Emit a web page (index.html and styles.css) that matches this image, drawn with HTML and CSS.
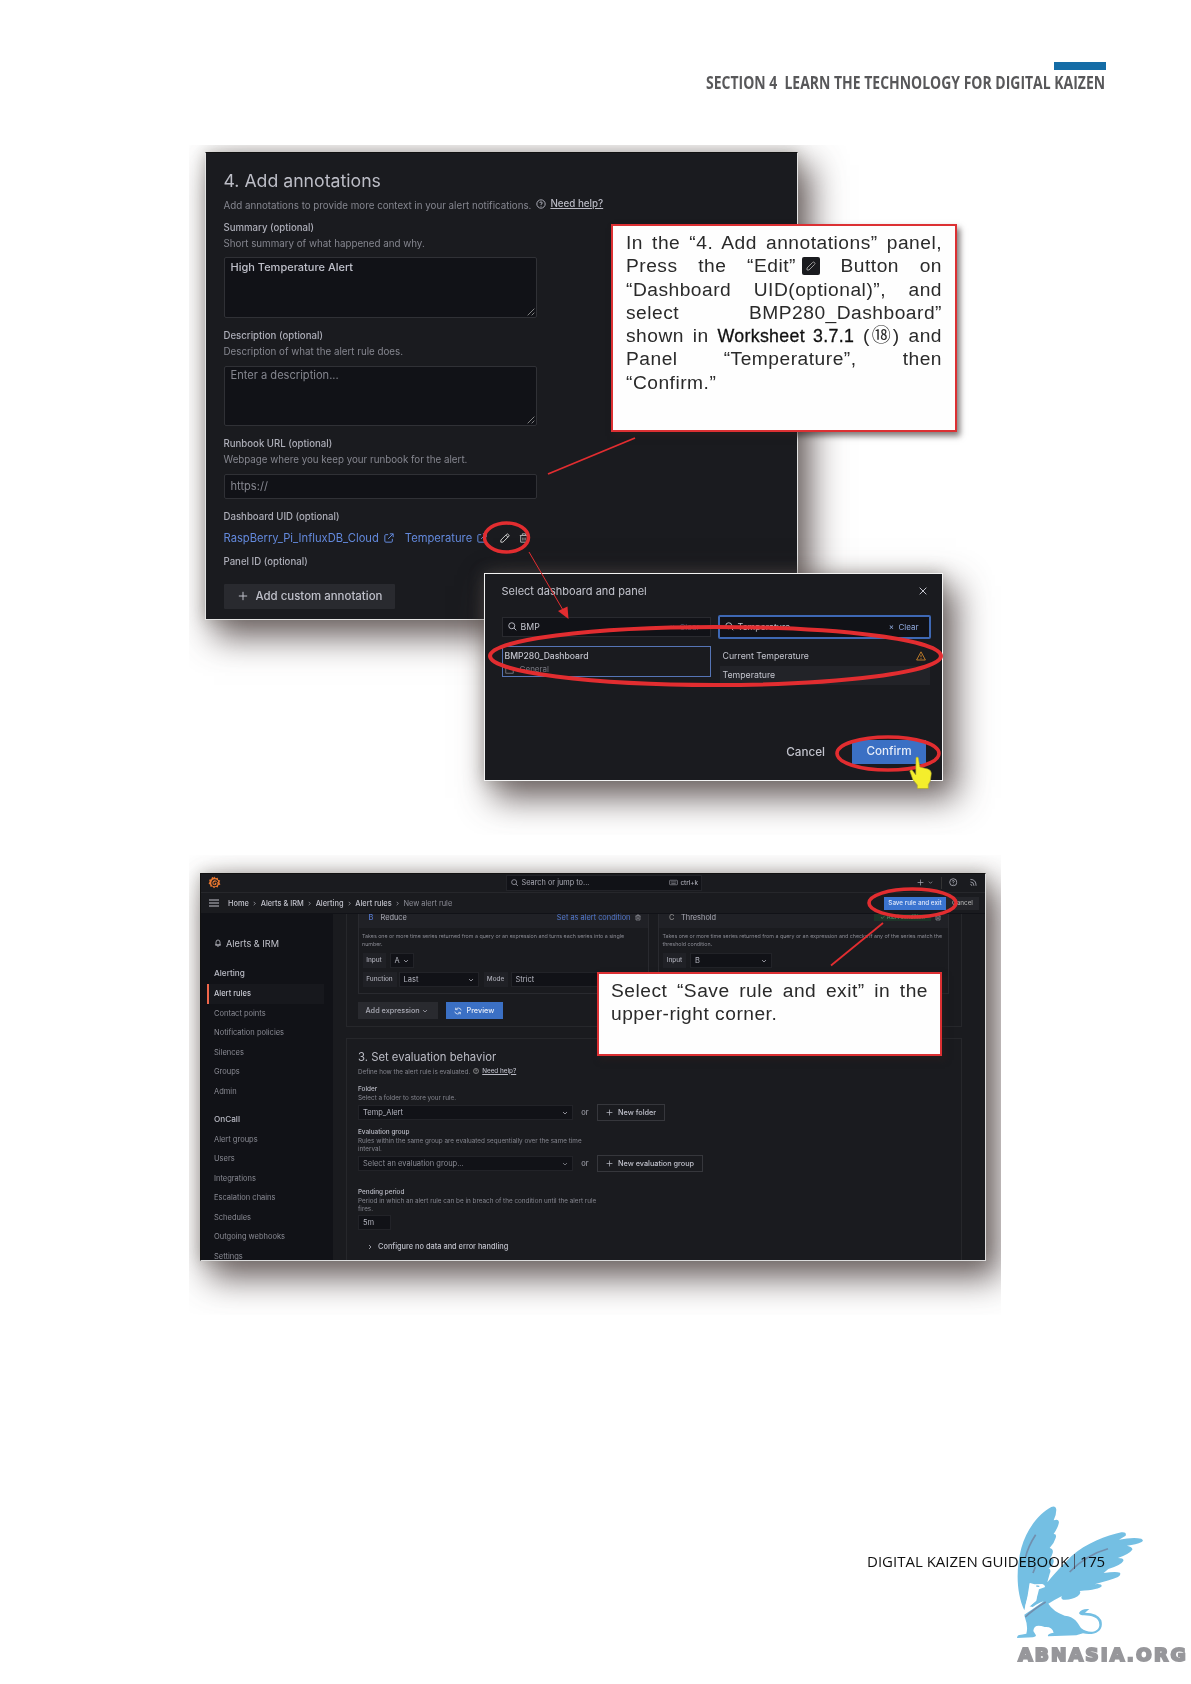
FILE: index.html
```html
<!DOCTYPE html>
<html lang="en">
<head>
<meta charset="utf-8">
<title>Digital Kaizen Guidebook – 175</title>
<link rel="stylesheet" href="styles.css">
</head>
<body>
<svg width="0" height="0" class="defs">
  <symbol id="search" viewBox="0 0 12 12"><circle cx="5" cy="5" r="4"/><path d="M8 8l3 3"/></symbol>
  <symbol id="ext" viewBox="0 0 12 12"><path d="M5 2H2.200Q1 2 1 3.200V9.800Q1 11 2.200 11H8.800Q10 11 10 9.800V7M7 1h4v4M11 1L5 7"/></symbol>
  <symbol id="pencil" viewBox="0 0 12 12"><path d="M1 11V8.500L8 1.500Q8.800.700 9.700 1.500L10.500 2.300Q11.300 3.200 10.500 4L3.500 11ZM7 2.500L9.500 5"/></symbol>
  <symbol id="trash" viewBox="0 0 12 12"><path d="M1 3h10M4 3V1h4v2M2 3v8h8V3M4.700 5.500v3.500M7.300 5.500v3.500"/></symbol>
  <symbol id="plus" viewBox="0 0 12 12"><path d="M6 1v10M1 6h10"/></symbol>
  <symbol id="cross" viewBox="0 0 12 12"><path d="M2 2l8 8M10 2L2 10"/></symbol>
  <symbol id="down" viewBox="0 0 12 12"><path d="M2 4l4 4 4-4"/></symbol>
  <symbol id="right" viewBox="0 0 12 12"><path d="M4 2l4 4-4 4"/></symbol>
  <symbol id="help" viewBox="0 0 12 12"><circle cx="6" cy="6" r="5"/><path d="M4.500 4.800Q4.600 3.500 6 3.500T7.500 4.800Q7.500 5.800 6 6.200V7M6 8.200v1"/></symbol>
  <symbol id="grip" viewBox="0 0 12 12"><path d="M1 11L11 1M7 11l4-4"/></symbol>
</svg>

<header class="page-head">
  <div class="tab"></div>
  <div class="section-name"><span>SECTION 4&nbsp; LEARN THE TECHNOLOGY FOR DIGITAL KAIZEN</span></div>
</header>

<figure class="fig fig-a">
  <div class="annot">
    <h2>4. Add annotations</h2>
    <div class="help-row"><span class="intro">Add annotations to provide more context in your alert notifications.</span><svg class="ic"><use href="#help"/></svg><u>Need help?</u></div>
    <label>Summary (optional)</label>
    <p>Short summary of what happened and why.</p>
    <div class="area filled">High Temperature Alert<svg class="grip"><use href="#grip"/></svg></div>
    <label>Description (optional)</label>
    <p>Description of what the alert rule does.</p>
    <div class="area">Enter a description...<svg class="grip"><use href="#grip"/></svg></div>
    <label>Runbook URL (optional)</label>
    <p>Webpage where you keep your runbook for the alert.</p>
    <div class="area line">https://</div>
    <label class="uid">Dashboard UID (optional)</label>
    <div class="links"><span class="l1">RaspBerry_Pi_InfluxDB_Cloud</span><svg class="ic"><use href="#ext"/></svg><span class="l2">Temperature</span><svg class="ic"><use href="#ext"/></svg><svg class="ic pen"><use href="#pencil"/></svg><svg class="ic bin"><use href="#trash"/></svg></div>
    <label class="pid">Panel ID (optional)</label>
    <div class="add"><svg class="ic"><use href="#plus"/></svg><span>Add custom annotation</span></div>
  </div>

  <div class="dialog">
    <div class="d-title"><span>Select dashboard and panel</span><svg class="ic"><use href="#cross"/></svg></div>
    <div class="d-cols">
      <div class="d-col">
        <div class="d-search"><svg class="ic"><use href="#search"/></svg><span>BMP</span><em>×&nbsp; Clear</em></div>
        <div class="d-item"><b>BMP280_Dashboard</b><i><svg class="ic" viewBox="0 0 12 12"><path d="M1 2h4l1 2h5v7H1z"/></svg>General</i></div>
      </div>
      <div class="d-col">
        <div class="d-search on"><svg class="ic"><use href="#search"/></svg><span>Temperature</span><em>×&nbsp; Clear</em></div>
        <div class="d-row"><span>Current Temperature</span><svg class="warn" viewBox="0 0 12 12"><path d="M6 1L11.300 10.800H.700ZM6 4.500v3M6 8.500v1"/></svg></div>
        <div class="d-row sel"><span>Temperature</span></div>
      </div>
    </div>
    <div class="d-foot"><span class="cancel">Cancel</span><span class="confirm">Confirm</span></div>
  </div>

  <div class="note note-a">
    <div>In the “4. Add annotations” panel,</div>
    <div>Press the “Edit”<svg class="edit" viewBox="0 0 18 18"><rect width="18" height="18" rx="2"/><path d="M5 13v-2l5.500-5.500q1-1 2 0t0 2L7 13z"/></svg> Button on</div>
    <div>“Dashboard UID(optional)”, and</div>
    <div>select BMP280_Dashboard”</div>
    <div>shown in <span class="ws">Worksheet&nbsp;3.7.1</span> (<span class="num18">⑱</span>) and</div>
    <div>Panel “Temperature”, then</div>
    <div class="last">“Confirm.”</div>
  </div>

  <svg class="marks" viewBox="189 145 812 690">
    <ellipse cx="506.500" cy="537.500" rx="22" ry="14.500" stroke-width="3.500"/>
    <ellipse cx="715.500" cy="656" rx="225.500" ry="29" stroke-width="4"/>
    <ellipse cx="888" cy="753.500" rx="51" ry="16.500" stroke-width="3.600"/>
    <path d="M548 474L635 438" stroke-width="1.800"/>
    <path d="M529 552L563 610" stroke-width="1"/>
    <path d="M558 611L567.500 606.500L568.500 619Z" class="head"/>
    <path class="hand" d="M916 757.500q1.300-1 2.300.300l1.500 9.200 8 2q3.500 1 3.500 4.500l-1 7.500-2 3.500v4h-11v-3.500l-4.500-5.500-3-8.500q1.500-2 3.500.500l2.500 3.500z"/>
  </svg>
</figure>

<figure class="fig fig-b">
  <div class="app">
    <div class="top">
      <svg class="logo" viewBox="0 0 24 24"><path d="M12 1l2 3 4-1 .500 4 4 1.500-1.500 3.500 2 3.500-4 1.500-1 4-4-1-3 2.500-2.500-3-4 .500-.500-4L1 14l2-3.500L2 7l4-1 1.500-4L11 3z"/><path class="swirl" d="M18 11.500Q17 7 12.500 7T7 12.500Q7 18 12 18T16.500 13.500Q15.500 10.500 12.500 11.500T12.500 15"/></svg>
      <div class="jump"><svg class="ic"><use href="#search"/></svg><span>Search or jump to...</span><svg class="kbd" viewBox="0 0 16 12"><rect x="1" y="2" width="14" height="8" rx="1"/><path d="M3 5h10M4 8h8"/></svg><em>ctrl+k</em></div>
      <div class="tools"><svg class="ic"><use href="#plus"/></svg><svg class="ic sm"><use href="#down"/></svg><i></i><svg class="ic big"><use href="#help"/></svg><svg class="ic big rss" viewBox="0 0 12 12"><path d="M2 2Q10 2 10 11M2 5.500Q7 5.500 7 11M2 9q2 0 2 2"/></svg></div>
    </div>
    <div class="crumbs">
      <svg class="burger" viewBox="0 0 10 8"><path d="M0 1h10M0 4h10M0 7h10"/></svg>
      <span class="c1">Home</span><svg class="ic sm"><use href="#right"/></svg><span class="c2">Alerts &amp; IRM</span><svg class="ic sm"><use href="#right"/></svg><span class="c3">Alerting</span><svg class="ic sm"><use href="#right"/></svg><span class="c4">Alert rules</span><svg class="ic sm"><use href="#right"/></svg><span class="c5">New alert rule</span>
      <b class="save">Save rule and exit</b><b class="can">Cancel</b>
    </div>
    <div class="body">
      <nav>
        <div class="n-title"><svg class="ic" viewBox="0 0 12 12"><path d="M3 9V5Q3 1.500 6 1.500T9 5V9ZM1.500 9h9M5 11h2"/></svg>Alerts &amp; IRM</div>
        <div class="n-h">Alerting</div>
        <div class="n on">Alert rules</div>
        <div class="n">Contact points</div>
        <div class="n">Notification policies</div>
        <div class="n">Silences</div>
        <div class="n">Groups</div>
        <div class="n">Admin</div>
        <div class="n-h oc">OnCall</div>
        <div class="n">Alert groups</div>
        <div class="n">Users</div>
        <div class="n">Integrations</div>
        <div class="n">Escalation chains</div>
        <div class="n">Schedules</div>
        <div class="n">Outgoing webhooks</div>
        <div class="n">Settings</div>
      </nav>
      <main>
        <section class="exprs">
          <div class="cards">
            <div class="card">
              <div class="c-head"><b>B</b><span>Reduce</span><em>Set as alert condition</em><svg class="ic"><use href="#trash"/></svg></div>
              <p>Takes one or more time series returned from a query or an expression and turns each series into a single<br>number.</p>
              <div class="f-row"><label class="w23">Input</label><div class="sel w24">A<svg class="ic sm"><use href="#down"/></svg></div></div>
              <div class="f-row"><label class="w34">Function</label><div class="sel w80">Last<svg class="ic sm"><use href="#down"/></svg></div><label class="w24 mode">Mode</label><div class="sel w130">Strict</div></div>
            </div>
            <div class="card">
              <div class="c-head"><b class="grey">C</b><span>Threshold</span><u>✓ Alert condition</u><svg class="ic"><use href="#trash"/></svg></div>
              <p>Takes one or more time series returned from a query or an expression and checks if any of the series match the<br>threshold condition.</p>
              <div class="f-row"><label class="w23">Input</label><div class="sel w82">B<svg class="ic sm"><use href="#down"/></svg></div></div>
            </div>
          </div>
          <div class="btns"><div class="b-add">Add expression<svg class="ic sm"><use href="#down"/></svg></div><div class="b-prev"><svg class="ic" viewBox="0 0 12 12"><path d="M2.500 1v3h3M2.500 4Q4 1.500 6.500 1.500Q10 1.500 10.800 5M9.500 11V8h-3M9.500 8Q8 10.500 5.500 10.500Q2 10.500 1.200 7"/></svg>Preview</div></div>
        </section>
        <section class="evals">
          <h3>3. Set evaluation behavior</h3>
          <div class="e-help"><span>Define how the alert rule is evaluated.</span><svg class="ic"><use href="#help"/></svg><u>Need help?</u></div>
          <div class="lab lab1">Folder</div>
          <div class="sub">Select a folder to store your rule.</div>
          <div class="pick"><div class="sel">Temp_Alert<svg class="ic sm"><use href="#down"/></svg></div><span>or</span><div class="new n1"><svg class="ic"><use href="#plus"/></svg>New folder</div></div>
          <div class="lab lab2">Evaluation group</div>
          <div class="sub wide">Rules within the same group are evaluated sequentially over the same time<br>interval.</div>
          <div class="pick"><div class="sel dim">Select an evaluation group...<svg class="ic sm"><use href="#down"/></svg></div><span>or</span><div class="new n2"><svg class="ic"><use href="#plus"/></svg>New evaluation group</div></div>
          <div class="lab lab3">Pending period</div>
          <div class="sub">Period in which an alert rule can be in breach of the condition until the alert rule<br>fires.</div>
          <div class="sel five">5m</div>
          <div class="conf"><svg class="ic sm"><use href="#right"/></svg>Configure no data and error handling</div>
        </section>
      </main>
    </div>
  </div>
  <div class="note note-b"><div>Select “Save rule and exit” in the</div><div class="last">upper-right corner.</div></div>
  <svg class="marks" viewBox="189 855 812 460">
    <ellipse cx="912.500" cy="903" rx="43.500" ry="14" stroke-width="3.600"/>
    <path d="M831 965.500L883 923" stroke-width="1.800"/>
  </svg>
</figure>

<footer><span class="book">DIGITAL KAIZEN GUIDEBOOK</span><i></i><span class="num">175</span></footer>

<div class="brand">
  <svg viewBox="490 40 400 410">
    <path d="M524 362C500 310 498 240 515 175C532 115 570 70 605 52Q618 47 620 60Q620 75 612 92Q626 86 628 97Q627 110 612 133Q622 132 618 145Q614 160 600 175Q612 178 609 190Q606 200 602 205Q614 205 612 217Q610 228 597 236Q606 240 600 252L593 278Q620 245 665 200C710 160 770 138 815 128Q832 126 828 138L808 150Q850 142 875 147Q884 152 876 157Q860 165 832 168Q850 172 848 180Q840 192 805 205Q824 205 821 214Q815 226 776 238L762 250Q800 244 811 249Q815 257 805 262Q780 272 735 284Q757 281 756 290Q750 300 690 304Q696 310 684 320Q665 332 640 330Q632 326 637 319Q615 330 596 342Q610 365 645 378C675 380 685 400 694 415C715 432 745 430 749 408C751 382 725 378 703 377Q690 377 688 370Q695 356 719 358L706 369Q745 370 755 392C764 425 735 438 700 431Q685 435 680 437L595 440Q592 432 612 429Q608 410 585 412Q553 400 551 424L558 435Q562 441 550 443L502 445Q502 435 514 435L530 432Q536 410 526 384L524 375Q548 360 582 335Q570 338 549 352L539 350L560 333Q561 315 566 299L551 297L540 280Q535 320 524 362Z"/>
    <path class="white" d="M541 280L555 284L578 283Q589 288 585 293L568 299Q562 325 558 334Q545 346 528 361Q525 350 529 340Q538 317 541 280Z"/>
    <path class="quill" d="M558 135Q535 170 527 205M660 247Q710 195 775 177M527 382Q550 360 588 337M557 232L550 250"/>
    <path class="eye" d="M560 289l9 1"/>
  </svg>
  <div class="word"><span>ABNASIA.ORG</span></div>
</div>
</body>
</html>
```

FILE: styles.css
```css
* { box-sizing: border-box; }
body { margin: 0; width: 1191px; height: 1684px; position: relative; overflow: hidden; background: #fff; font-family: Inter, "Liberation Sans", sans-serif; white-space: nowrap; }
h2, h3, p, figure { margin: 0; font-weight: 400; }
em, i { font-style: normal; }
svg { display: block; flex: none; fill: none; stroke: currentColor; }
.defs { position: absolute; }
.ic { width: 10px; height: 10px; stroke-width: 1.2; }

.page-head { height: 145px; padding: 62px 85.500px 0 0; display: flex; flex-direction: column; align-items: flex-end; }
.tab { width: 51.500px; height: 8px; background: #146ca6; }
.section-name { width: 399.500px; height: 24px; font: 700 18.500px/24px "Open Sans", sans-serif; color: #58585a; }
.section-name span { display: inline-block; transform-origin: 0 50%; transform: scaleX(.755); }

.fig { position: relative; margin-left: 189px; width: 812px; overflow: hidden; }
.fig-a { height: 690px; padding: 7px 0 0 16px; }
.fig-b { margin-top: 20px; height: 460px; padding: 18px 0 0 11px; }
.annot, .dialog, .app { background: #1a1b1f; box-shadow: 0 0 14px rgba(110,105,95,.4), 11px 15px 32px 2px rgba(70,58,58,.8); }

.annot { width: 593px; height: 468px; border: 1px solid #e4e4e4; border-top-color: #111; padding: 16px 0 0 17.500px; color: #85868f; font-size: 9.780px; }
.annot h2 { font-size: 17.700px; line-height: 24px; color: #bcbdc6; }
.help-row { display: flex; align-items: center; height: 14px; margin: 5px 0 8.500px; }
.help-row .ic { margin: -3px 4px 0 5px; color: #aaabb5; }
.help-row u { color: #b9bac4; margin-top: -4px; font-weight: 500; }
.annot label { display: block; height: 14px; line-height: 14px; color: #adaeb8; font-weight: 500; font-size: 9.650px; }
.annot p { height: 14px; line-height: 14px; margin: 2px 0 6.800px; }
.area { position: relative; width: 313.500px; height: 60.500px; margin-bottom: 11px; background: #111217; border: 1px solid #303136; border-radius: 2px; padding: 1.500px 6px; line-height: 15px; font-size: 11.100px; }
.filled { color: #bfc0ca; font-weight: 500; font-size: 11px; }
.grip { position: absolute; right: 1px; bottom: 1px; width: 8px; height: 8px; color: #bbb; }
.line { height: 25px; padding-top: 4px; }
.links { display: flex; align-items: center; height: 16px; margin: 6px 0 9px; color: #6389dc; font-size: 11.200px; }
.links .ic { margin-left: 5px; }
.l2 { margin-left: 11px; }
.links .pen { color: #ccc; margin-left: 12.500px; }
.links .bin { color: #aaa; margin-left: 9px; }
.add { width: 171px; height: 25px; margin-top: 15px; display: flex; align-items: center; background: #292a2f; border-radius: 1px; color: #bfc0ca; font-weight: 500; font-size: 11.450px; padding-left: 14px; gap: 8px; }

.dialog { position: absolute; left: 294.500px; top: 427.500px; width: 459.500px; height: 208px; border: 1px solid #f4f4f4; padding: 9px 11px 0 17px; color: #c3c4cd; font-size: 8.750px; }
.d-title { display: flex; justify-content: space-between; align-items: center; height: 16px; padding-right: 3px; font-size: 11px; }
.d-cols { display: flex; gap: 7px; margin-top: 16px; }
.d-col { width: 209px; }
.d-search { display: flex; align-items: center; height: 20px; margin: 2px 0 9px; border: 1px solid #292a2f; background: #111217; padding: 0 10px 0 5px; }
.d-search .ic { width: 9px; height: 9px; margin-right: 4px; }
.d-search em { margin-left: auto; font-size: 8px; color: #8fa8dc; }
.d-col:first-child em { color: #4b5268; }
.on.d-search { width: 213px; height: 24px; margin: 0 0 9px; border: 2px solid #3e68b4; border-radius: 2px; }
.d-item { height: 31px; border: 1px solid #5574b5; padding: 3px 2px; line-height: 12px; }
.d-item b { display: block; font-weight: 500; font-size: 8.600px; }
.d-item i { display: flex; align-items: center; color: #777881; font-size: 8px; line-height: 15px; }
.d-item .ic { width: 9px; height: 9px; margin-right: 6px; }
.d-row { display: flex; align-items: center; justify-content: space-between; height: 18px; padding: 0 2px 0 5px; width: 210px; margin-top: -1px; }
.d-row.sel { width: 210px; margin: 1px 0 0 2px; padding-left: 3px; height: 19px; background: #222328; border: 0; font-size: inherit; color: inherit; }
.warn { width: 10px; height: 10px; color: #d98b2b; }
.d-foot { display: flex; justify-content: flex-end; align-items: center; height: 24px; margin: 55.500px 5px 0 0; font-size: 11.700px; font-weight: 500; gap: 27px; }
.confirm { width: 74px; height: 24px; line-height: 23px; background: #3b70c4; color: #e6ecf8; text-align: center; }

.note { position: absolute; background: #fefefe; border: 2px solid #dc3033; box-shadow: 3px 4px 6px rgba(40,30,30,.6); font: 19.200px/23.300px "Liberation Sans", "Noto Sans CJK JP", sans-serif; letter-spacing: .500px; color: #2a2a2a; }
.note div { text-align: justify; text-align-last: justify; height: 23.300px; }
.note .last { text-align-last: left; }
.note-a { left: 422px; top: 79px; width: 346px; height: 208px; padding: 5px 13px 0 13px; }
.note-b { left: 408px; top: 117px; width: 345px; height: 83.500px; padding: 5px 12px 0 12px; }
.ws { font-size: 17.800px; letter-spacing: .300px; color: #111; -webkit-text-stroke: .300px #111; }
.num18 { font: 19px/20px "Noto Sans CJK JP", sans-serif; letter-spacing: 0; margin: 0 -1px; }
.edit { display: inline-block; width: 18px; height: 18px; margin: 0 0 0 6px; vertical-align: -3px; color: #999; }
.edit rect { fill: #1a1b1f; stroke: none; }
.marks { position: absolute; left: 0; top: 0; width: 812px; height: 100%; stroke: #e22d30; }
.head { fill: #e22d30; stroke: none; }
.hand { fill: #f4ee2c; stroke: #a9a32a; stroke-width: .600; }

.app { width: 786px; height: 388px; border: 1px solid #ddd; border-top-color: #111; border-left-color: #111; overflow: clip; color: #a9aab4; font-size: 7.500px; }
.fig-b .sm { width: 6px; height: 6px; stroke-width: 1.500; }
.top { display: flex; align-items: center; height: 19px; border-bottom: 1px solid #26272b; padding-left: 7px; }
.logo { width: 13px; height: 13px; fill: #e9772f; stroke: none; margin-top: -1px; }
.logo .swirl { fill: none; stroke: #1a1b1f; stroke-width: 2; }
.jump { display: flex; align-items: center; width: 196px; height: 16px; margin: -1px 0 0 285px; background: #111217; border: 1px solid #222328; padding: 0 3px 0 4px; font-size: 7.350px; }
.jump .ic { width: 7.500px; height: 7.500px; margin-right: 3px; }
.jump em { font-size: 6.300px; font-weight: 500; }
.kbd { width: 9px; height: 7px; margin: 0 2px 0 auto; }
.tools { display: flex; align-items: center; margin: -1px 0 0 215px; }
.tools .ic { width: 7px; height: 7px; }
.tools .sm { width: 5px; margin: 0 8px 0 4px; }
.tools i { width: 1px; height: 12px; background: #333; margin-right: 7px; }
.tools .big { width: 8.500px; height: 8.500px; }
.tools .rss { margin-left: 11px; }
.crumbs { display: flex; align-items: center; height: 21px; padding-left: 8px; font-weight: 500; font-size: 7.400px; color: #c0c1ca; border-bottom: 1px solid #111217; }
.burger { width: 10px; height: 8px; margin-right: 9px; }
.crumbs .sm { width: 5px; height: 5px; margin: 0 3.400px; }
.c5 { font-weight: 400; color: #8c8d96; }
.save, .can { font-weight: 500; font-size: 6.300px; height: 13px; line-height: 13px; text-align: center; }
.save { width: 62px; margin-left: auto; background: #3b74d0; color: #e0e8fa; }
.can { width: 33px; margin: 0 6px 0 0; background: #24252a; color: #aaa; }
.body { display: flex; height: 347px; }
nav { width: 132px; background: #111217; padding: 20px 9px 0 6px; color: #8a8b94; }
.n-title { display: flex; align-items: center; height: 18px; font-size: 9.200px; color: #c0c1ca; padding-left: 7px; }
.n-title .ic { width: 8px; height: 8px; margin-right: 4px; }
.n-h { height: 18px; line-height: 18px; margin-top: 12px; padding-left: 7px; font-weight: 500; font-size: 8.200px; color: #bbbcc6; }
.n { height: 19.520px; line-height: 19.520px; padding-left: 7px; }
.n.on { background: #17181d; color: #c8c9d2; font-weight: 500; border-left: 2px solid #f0664a; padding-left: 5px; margin-top: 2px; height: 19.500px; }
.oc { margin: 9px 0 1.500px; }
main { padding-left: 13px; width: 629px; }
.exprs { height: 113px; border: 1px solid #26272b; border-top: 0; padding: 0 12px 0 10.500px; }
.cards { display: flex; justify-content: space-between; height: 80px; }
.card { width: 291px; border: 1px solid #292a2f; border-top: 0; font-size: 5.300px; }
.c-head { display: flex; align-items: flex-start; height: 14px; line-height: 7px; background: #202126; font-size: 7.400px; padding: 0 7px 0 10px; }
.c-head b { font-weight: 500; color: #5578cc; width: 12px; }
.c-head .grey { color: #888; }
.c-head em, .c-head u { margin-left: auto; color: #5379ce; text-decoration: none; }
.c-head .ic { width: 6px; height: 7px; margin-left: 4px; }
.c-head u { width: 57px; height: 7px; background: #1d3428; color: #5d9d70; font-size: 5.500px; text-align: center; }
.card p { line-height: 8px; height: 16px; margin: 4px 0 5px 3.500px; color: #8a8b94; }
.f-row { display: flex; height: 15px; margin: 0 0 4px 4px; }
.f-row label { background: #202126; font-weight: 500; font-size: 6.400px; line-height: 15px; text-align: center; }
.w23 { width: 23px; margin-right: 4px; } .w34 { width: 34px; margin-right: 2px; } .w24 { width: 24px; }
.w80 { width: 80px; } .w130 { width: 132px; margin-left: 3px; } .w82 { width: 82px; } .mode { margin-left: 5px; }
.sel { display: flex; align-items: center; justify-content: space-between; height: 15px; background: #111217; border: 1px solid #222328; padding: 0 4px; font-size: 7.500px; color: #b5b6c0; }
.f-row .w130 { width: 128px; }
.btns { display: flex; gap: 8px; margin-top: 8px; }
.btns > div { display: flex; align-items: center; height: 17px; font-weight: 500; padding-left: 8px; font-size: 7.300px; }
.b-add { width: 80px; background: #292a2f; gap: 2px; }
.b-prev { width: 57px; background: #3b70c4; color: #e6ecf8; gap: 5px; }
.b-prev .ic { width: 8px; height: 8px; }
.evals { height: 240px; margin-top: 11px; border: 1px solid #26272b; padding: 10px 0 0 11px; }
.evals h3 { font-size: 11.300px; line-height: 16px; color: #bcbdc6; }
.e-help { display: flex; align-items: center; height: 10px; margin-top: 2px; font-size: 6.300px; color: #85868f; }
.e-help .ic { width: 6px; height: 6px; margin: -2px 3px 0 3px; color: #bbb; }
.e-help u { color: #b9bac4; margin-top: -3px; font-weight: 500; }
.lab { height: 10px; line-height: 10px; font-size: 6.400px; font-weight: 500; color: #bbbcc6; }
.lab1 { margin-top: 7px; } .lab2 { margin-top: 6px; } .lab3 { margin-top: 14.500px; }
.sub { line-height: 8px; font-size: 6.350px; color: #85868f; margin-bottom: 2px; }
.pick { display: flex; align-items: center; height: 17px; }
.pick .sel { width: 215px; }
.pick span { width: 24px; text-align: center; }
.sel.dim { color: #8c8d96; }
.new { display: flex; align-items: center; height: 17px; border: 1px solid #36373c; padding-left: 8px; gap: 5px; font-weight: 500; font-size: 7.300px; color: #bfc0ca; }
.new .ic { width: 7px; height: 7px; }
.n1 { width: 68px; } .n2 { width: 106px; }
.five { width: 33px; }
.conf { display: flex; align-items: center; height: 12px; margin: 11px 0 0 9px; gap: 5px; font-weight: 500; font-size: 7.400px; color: #bfc0ca; }

footer { display: flex; align-items: center; height: 20px; margin: 236px 0 0 867px; font: 15px/20px "Open Sans", sans-serif; color: #111; }
.num { letter-spacing: -.350px; }
footer i { width: 1px; height: 15px; background: #b07a7a; margin: 0 5px; }
.brand { position: absolute; left: 1013.300px; top: 1503.300px; color: #7a7a80; mix-blend-mode: multiply; }
.brand svg { width: 133.300px; height: 136.700px; fill: #74bfe3; stroke: none; }
.brand .white { fill: #fff; }
.brand .quill { fill: none; stroke: #718fae; stroke-width: 5; }
.brand .eye { stroke: #74bfe3; stroke-width: 4; }
.word { margin: 3px 0 0 5px; height: 24px; font: 700 18.500px/24px "DejaVu Sans", sans-serif; color: #97979b; -webkit-text-stroke: 2px #97979b; }
.word span { letter-spacing: 2.200px; }
```
